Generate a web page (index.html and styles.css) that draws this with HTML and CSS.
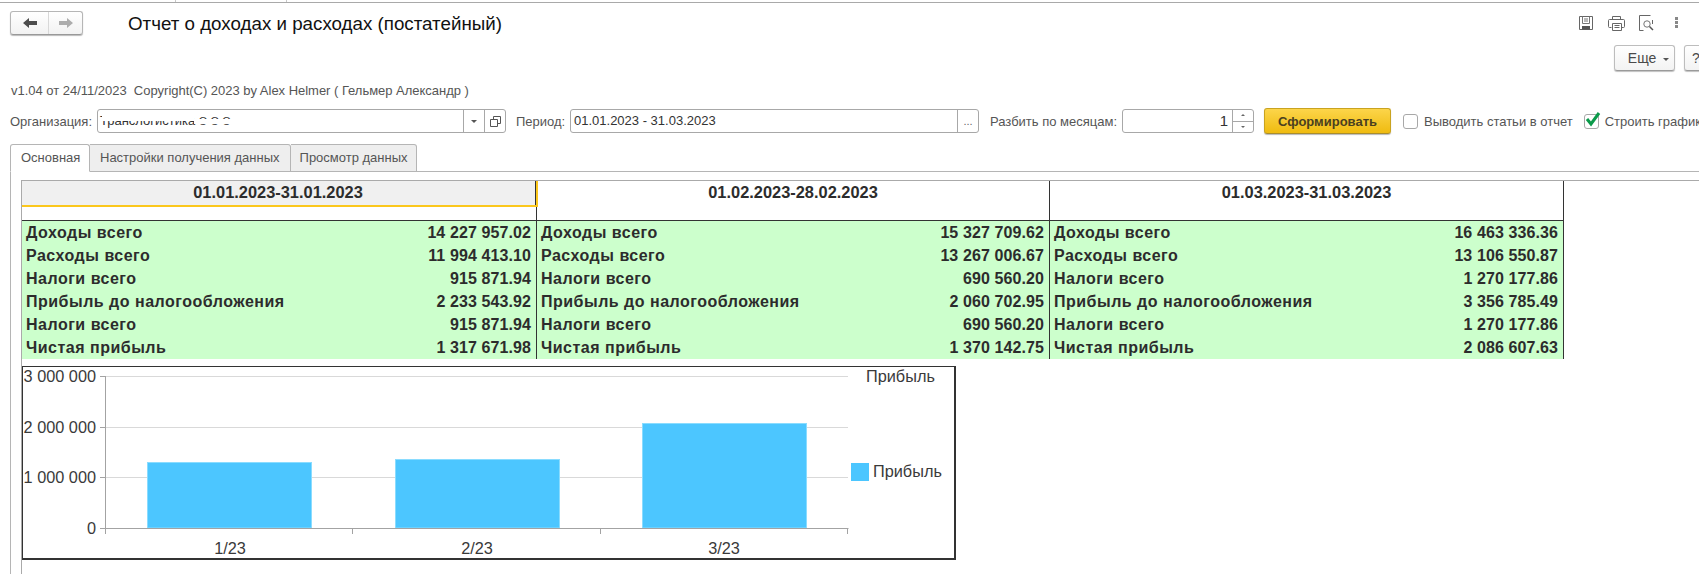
FILE: index.html
```html
<!DOCTYPE html>
<html lang="ru">
<head>
<meta charset="utf-8">
<title>Отчет о доходах и расходах (постатейный)</title>
<link rel="stylesheet" href="styles.css">
</head>
<body>
<div class="topbar"><span class="stub stub-a"></span><span class="stub stub-b"></span></div>
<header class="head-row">
  <div class="nav">
    <button class="nav-btn">
      <svg width="14" height="12" viewBox="0 0 14 12"><path d="M0 6 L6 1 V4 H14 V8 H6 V11 Z" fill="#4d4d4d"/></svg>
    </button>
    <button class="nav-btn nav-next">
      <svg width="14" height="12" viewBox="0 0 14 12"><path d="M14 6 L8 1 V4 H0 V8 H8 V11 Z" fill="#adadad"/></svg>
    </button>
  </div>
  <h1 class="title">Отчет о доходах и расходах (постатейный)</h1>
  <div class="tools">
    <svg class="tool" width="16" height="16" viewBox="0 0 16 16" fill="none" stroke="#666"><path d="M1.5 1.5H14.500V14.500H1.500Z"/><path d="M4.500 1.500V8.500H11.500V1.500M6 4H10M6 6H10" stroke="#777"/><path d="M4 11H12V14.500H4Z" fill="#555" stroke="none"/></svg>
    <svg class="tool" width="17" height="16" viewBox="0 0 17 16" fill="none" stroke="#666"><path d="M4.500 4.500V1.500H12.500V4.500"/><path d="M3.500 12.500H1.500Q.5 12.500 .5 11.500V5.500Q.5 4.500 1.500 4.500H15.500Q16.500 4.500 16.500 5.500V11.500Q16.500 12.500 15.500 12.500H14"/><path d="M4.500 8.500H13.500V15.500H4.500ZM6.500 10.500H11.500M6.500 12.500H11.500"/></svg>
    <svg class="tool tool-preview" width="16" height="16" viewBox="0 0 16 16" fill="none" stroke="#666"><path d="M5.500 15.500H1.500V.5H12.500M14.500 5V9"/><circle cx="9" cy="9" r="3.200" stroke="#777"/><path d="M11.500 11.500L15 15" stroke="#555" stroke-width="1.500"/></svg>
    <svg class="tool dots" width="4" height="12" viewBox="0 0 4 12" fill="#888"><rect y="0" width="3" height="3"/><rect y="4" width="3" height="3"/><rect y="8" width="3" height="3"/></svg>
  </div>
</header>
<div class="actions">
  <button class="btn btn-more">Еще <i class="caret"></i></button>
  <button class="btn btn-help">?</button>
</div>
<p class="version">v1.04 от 24/11/2023&nbsp; Copyright(C) 2023 by Alex Helmer ( Гельмер Александр )</p>
<form class="form-row">
  <label class="lbl lbl-org">Организация:</label>
  <div class="field f-org">
    <span class="val val-org">Транслогистика <span class="org-suffix">ООО</span>
      <i class="mask mask-a"></i><i class="mask mask-b"></i>
    </span>
    <span class="cell"><i class="caret"></i></span>
    <span class="cell">
      <svg width="11" height="11" viewBox="0 0 11 11" fill="none" stroke="#555"><path d="M3.500 3.500V.5H10.500V7.500H7.500"/><path d="M.5 3.500H7.500V10.500H.5Z"/></svg>
    </span>
  </div>
  <label class="lbl lbl-period">Период:</label>
  <div class="field f-period">
    <span class="val">01.01.2023 - 31.03.2023</span>
    <span class="cell cell-dots">...</span>
  </div>
  <label class="lbl lbl-split">Разбить по месяцам:</label>
  <div class="field f-spin">
    <span class="val val-num">1</span>
    <span class="spin"><i class="spin-b"><b class="up"></b></i><i class="spin-b"><b class="down"></b></i></span>
  </div>
  <button class="primary" type="button">Сформировать</button>
  <span class="check c-one"></span>
  <label class="lbl">Выводить статьи в отчет</label>
  <span class="check c-two">
    <svg width="17" height="15" viewBox="0 0 17 15"><path d="M3 7 L7 12 L15 1" fill="none" stroke="#0b9a4a" stroke-width="3"/></svg>
  </span>
  <label class="lbl">Строить график</label>
</form>
<nav class="tabs">
  <span class="tab tab-on">Основная</span>
  <span class="tab">Настройки получения данных</span>
  <span class="tab tab-last">Просмотр данных</span>
</nav>
<main class="panel">
  <section class="report">
    <div class="grid">
      <div class="col col-1">
        <div class="date"><div class="date-sel">01.01.2023-31.01.2023</div></div>
        <div class="rows">
          <div class="row"><span>Доходы всего</span><span>14 227 957.02</span></div>
          <div class="row"><span>Расходы всего</span><span>11 994 413.10</span></div>
          <div class="row"><span>Налоги всего</span><span>915 871.94</span></div>
          <div class="row"><span>Прибыль до налогообложения</span><span>2 233 543.92</span></div>
          <div class="row"><span>Налоги всего</span><span>915 871.94</span></div>
          <div class="row"><span>Чистая прибыль</span><span>1 317 671.98</span></div>
        </div>
      </div>
      <div class="col col-2">
        <div class="date">01.02.2023-28.02.2023</div>
        <div class="rows">
          <div class="row"><span>Доходы всего</span><span>15 327 709.62</span></div>
          <div class="row"><span>Расходы всего</span><span>13 267 006.67</span></div>
          <div class="row"><span>Налоги всего</span><span>690 560.20</span></div>
          <div class="row"><span>Прибыль до налогообложения</span><span>2 060 702.95</span></div>
          <div class="row"><span>Налоги всего</span><span>690 560.20</span></div>
          <div class="row"><span>Чистая прибыль</span><span>1 370 142.75</span></div>
        </div>
      </div>
      <div class="col col-3">
        <div class="date">01.03.2023-31.03.2023</div>
        <div class="rows">
          <div class="row"><span>Доходы всего</span><span>16 463 336.36</span></div>
          <div class="row"><span>Расходы всего</span><span>13 106 550.87</span></div>
          <div class="row"><span>Налоги всего</span><span>1 270 177.86</span></div>
          <div class="row"><span>Прибыль до налогообложения</span><span>3 356 785.49</span></div>
          <div class="row"><span>Налоги всего</span><span>1 270 177.86</span></div>
          <div class="row"><span>Чистая прибыль</span><span>2 086 607.63</span></div>
        </div>
      </div>
    </div>
    <div class="chart">
      <svg class="chart-svg" width="931" height="191" viewBox="23 367 931 191">
        <g stroke="#d9d9d9"><path d="M106 376.500H848M106 427.500H848M106 477.500H848"/></g>
        <g fill="#4cc6ff" stroke="#8adcff" stroke-width="1">
          <rect x="147.500" y="462.500" width="164" height="65.500"/>
          <rect x="395.500" y="459.500" width="164" height="68.500"/>
          <rect x="642.500" y="423.500" width="164" height="104.500"/>
        </g>
        <g stroke="#a3a3a3"><path d="M105.500 376V534M100 528.500H848.500M100 477.500H106M100 427.500H106M100 376.500H106M352.500 528V534M600.500 528V534M847.500 528V534"/></g>
        <g class="axis-y" text-anchor="end">
          <text x="96" y="382">3 000 000</text>
          <text x="96" y="433">2 000 000</text>
          <text x="96" y="483">1 000 000</text>
          <text x="96" y="534">0</text>
        </g>
        <g class="axis-x" text-anchor="middle">
          <text x="230" y="554">1/23</text>
          <text x="477" y="554">2/23</text>
          <text x="724" y="554">3/23</text>
        </g>
        <text class="axis-y" x="866" y="382">Прибыль</text>
        <rect x="851" y="463" width="18" height="18" fill="#4cc6ff"/>
        <text class="axis-y" x="873" y="477">Прибыль</text>
      </svg>
    </div>
  </section>
</main>
</body>
</html>
```
FILE: styles.css
```css
* { box-sizing: border-box; }
html, body { margin: 0; padding: 0; }
body {
  width: 1699px;
  height: 574px;
  overflow: hidden;
  background: #fff;
  color: #4a4a4a;
  font-family: "Liberation Sans", Arial, sans-serif;
  font-size: 13px;
}
.topbar {
  height: 3px;
  border-bottom: 1px solid #a9a9a9;
  display: flex;
}
.stub { display: block; width: 1px; height: 2px; background: #c8c8c8; }
.stub-a { margin-left: 175px; }
.stub-b { margin-left: 110px; }

.head-row {
  height: 38px;
  display: flex;
  align-items: flex-start;
  padding: 8px 0 0 10px;
}
.nav {
  display: flex;
  width: 73px;
  height: 24px;
  border: 1px solid #b6b6b6;
  border-bottom-color: #999;
  border-radius: 3px;
  background: linear-gradient(#fff, #f2f2f2);
  box-shadow: 0 1px 1px #bbb;
}
.nav-btn {
  border: 0;
  background: none;
  padding: 0;
  width: 37px;
  display: flex;
  align-items: center;
  justify-content: center;
}
.nav-next { flex: 1; border-left: 1px solid #d8d8d8; }
.title {
  margin: 0 0 0 45px;
  font-size: 18.750px;
  line-height: 26px;
  font-weight: 400;
  color: #111;
}
.tools {
  margin-left: auto;
  display: flex;
  align-items: center;
  height: 24px;
  padding-right: 20px;
}
.tool { display: block; margin-left: 14px; }
.tool-preview { margin-left: 13px; }
.dots { margin-left: 21px; }

.actions {
  height: 30px;
  display: flex;
  justify-content: flex-end;
  align-items: flex-start;
  padding-top: 4px;
  margin-right: -20px;
}
.btn {
  height: 26px;
  border: 1px solid #bdbdbd;
  border-bottom-color: #9a9a9a;
  border-radius: 3px;
  background: linear-gradient(#fff, #f3f3f3);
  box-shadow: 0 1px 1px #c0c0c0;
  color: #4a4a4a;
  font: 14px "Liberation Sans", Arial, sans-serif;
  padding: 0;
}
.btn-more { width: 61px; padding-left: 8px; margin-right: 9px; }
.btn-help { width: 35px; text-align: left; padding-left: 7px; }
.caret {
  display: inline-block;
  width: 0;
  height: 0;
  margin-left: 3px;
  vertical-align: middle;
  border-left: 3px solid transparent;
  border-right: 3px solid transparent;
  border-top: 3px solid #555;
}

.version {
  margin: 0;
  height: 37px;
  padding: 13px 0 0 11px;
  line-height: 14px;
  font-size: 13px;
  letter-spacing: -0.020px;
  color: #555;
}
.form-row {
  height: 26px;
  display: flex;
  align-items: center;
  margin: 0;
  white-space: nowrap;
}
.form-row > * { flex: none; }
.lbl { color: #555; font-size: 13px; }
.lbl-org { margin-left: 10px; width: 87px; }
.lbl-period { margin-left: 10px; width: 54px; }
.lbl-split { margin-left: 11px; width: 132px; }
.field {
  height: 24px;
  display: flex;
  border: 1px solid #a8a8a8;
  border-radius: 3px;
  background: #fff;
}
.f-org { width: 409px; }
.f-period { width: 409px; }
.f-spin { width: 132px; }
.val {
  flex: 1;
  position: relative;
  padding-left: 3px;
  line-height: 22px;
  font-size: 13px;
  color: #333;
}
.val-org { padding-left: 2px; }
.org-suffix { font-size: 11px; letter-spacing: 3.200px; }
.val-num { text-align: right; padding: 0 4px 0 0; font-size: 15px; }
.mask { position: absolute; background: #fff; display: block; }
.mask-a { left: 4px; top: 2px; width: 92px; height: 9px; }
.mask-b { left: 96px; top: 9px; width: 50px; height: 5px; }
.cell {
  width: 21px;
  border-left: 1px solid #a8a8a8;
  display: flex;
  align-items: center;
  justify-content: center;
}
.cell .caret { margin: 0; }
.cell-dots { font-size: 11px; color: #666; align-items: flex-end; padding-bottom: 5px; }
.spin { width: 21px; border-left: 1px solid #a8a8a8; display: flex; flex-direction: column; }
.spin-b { flex: 1; display: flex; align-items: center; justify-content: center; }
.spin-b + .spin-b { border-top: 1px solid #a8a8a8; }
.up, .down { display: block; width: 0; height: 0; border-left: 2px solid transparent; border-right: 2px solid transparent; }
.up { border-bottom: 2px solid #666; }
.down { border-top: 2px solid #666; }
.primary {
  margin-left: 10px;
  width: 127px;
  height: 26px;
  border: 1px solid #c9a320;
  border-bottom-color: #a98d2c;
  border-radius: 3px;
  background: linear-gradient(#fcd54a, #efbb10);
  box-shadow: 0 1px 1px #b9b9b9;
  color: #4a4020;
  font: 700 13px "Liberation Sans", Arial, sans-serif;
  padding: 0;
}
.check {
  width: 15px;
  height: 15px;
  border: 1px solid #a8a8a8;
  border-radius: 3px;
  display: block;
  position: relative;
  margin-right: 6px;
}
.c-one { margin-left: 12px; }
.c-two { margin-left: 11px; }
.c-two svg { position: absolute; left: -1px; top: -3px; }

.tabs {
  display: flex;
  height: 28px;
  margin: 10px 0 -1px 10px;
  position: relative;
}
.tab {
  height: 28px;
  line-height: 26px;
  padding: 0 10px;
  font-size: 13px;
  color: #555;
  border: 1px solid #b5b5b5;
  border-left: 0;
  border-radius: 0 3px 0 0;
  background: #eeeeee;
}
.tab-last { padding: 0 8px 0 9px; }
.tab-on {
  width: 80px;
  border-left: 1px solid #b5b5b5;
  border-bottom-color: #fff;
  border-radius: 3px 3px 0 0;
  background: #fff;
}
.panel {
  margin-left: 10px;
  height: 403px;
  border-left: 1px solid #b5b5b5;
  border-top: 1px solid #b5b5b5;
  padding: 8px 0 0 10px;
}
.report {
  height: 394px;
  border-left: 1px solid #aaa;
  border-top: 1px solid #aaa;
}
.grid { display: flex; }
.col { width: 514px; }
.col-1 { width: 515px; }
.col-2 { width: 513px; }
.date {
  height: 40px;
  border-right: 1px solid #333;
  border-bottom: 1px solid #333;
  text-align: center;
  font-weight: 700;
  font-size: 16.400px;
  line-height: 22px;
  color: #2c2c2c;
}
.date-sel {
  height: 26px;
  margin-right: -2px;
  padding-right: 2px;
  background: #f0f0f0;
  border-bottom: 2px solid #fbc71c;
  border-right: 2px solid #fbc71c;
  box-shadow: inset -1px 0 0 #333;
  position: relative;
}
.rows {
  height: 138px;
  background: #ccffcc;
  border-right: 1px solid #333;
}
.row {
  height: 23px;
  padding: 0 5px 0 4px;
  display: flex;
  justify-content: space-between;
  line-height: 23px;
  font-size: 16px;
  font-weight: 700;
  color: #2c2c2c;
}
.row span:first-child { letter-spacing: 0.500px; }
.row span:last-child { letter-spacing: 0.100px; }
.chart {
  margin-top: 7px;
  width: 934px;
  height: 194px;
  border: 1px solid #333;
  border-right-width: 2px;
  border-bottom-width: 2px;
}
.chart-svg { display: block; }
.axis-y, .axis-x { font: 16.300px "Liberation Sans", Arial, sans-serif; fill: #3a3a3a; }
```
